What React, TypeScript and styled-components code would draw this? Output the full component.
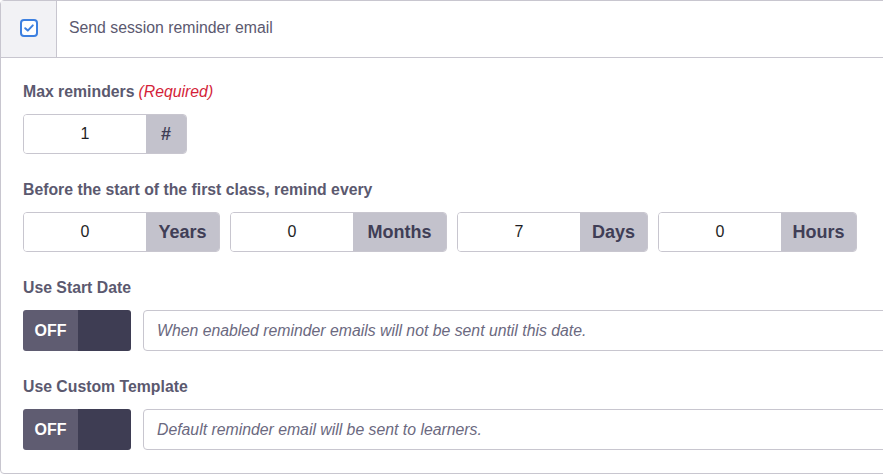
import React from 'react';
import styled, { createGlobalStyle } from 'styled-components';

const GlobalStyle = createGlobalStyle`
  html, body {
    margin: 0;
    padding: 0;
    background: #fff;
    overflow: hidden;
  }
  body {
    font-family: "Liberation Sans", Arial, sans-serif;
  }
`;

const Card = styled.div`
  width: 920px;
  height: 474px;
  box-sizing: border-box;
  border: 1px solid #c8c6cf;
  border-radius: 4px;
  background: #fff;
  display: flex;
  flex-direction: column;
`;

const Header = styled.div`
  display: flex;
  align-items: stretch;
  height: 57px;
  box-sizing: border-box;
  border-bottom: 1px solid #c8c6cf;
`;

const CheckCell = styled.div`
  width: 56px;
  flex: none;
  box-sizing: border-box;
  background: #f2f2f5;
  border-right: 1px solid #c8c6cf;
  display: flex;
  align-items: center;
  justify-content: center;
  padding-bottom: 2px;
`;

const HeaderTitle = styled.div`
  display: flex;
  align-items: center;
  padding-left: 12px;
  padding-bottom: 2px;
  font-size: 15.8px;
  color: #5b596f;
`;

const Body = styled.div`
  padding: 24px 22px 0 22px;
  display: flex;
  flex-direction: column;
  gap: 26px;
`;

const Field = styled.div`
  display: flex;
  flex-direction: column;
  gap: 12px;
`;

const Label = styled.div`
  font-size: 15.8px;
  line-height: 20px;
  font-weight: bold;
  color: #5b596f;
  em {
    font-weight: normal;
    color: #d41f3a;
    margin-left: 4px;
  }
`;

const Row = styled.div`
  display: flex;
  gap: 10px;
  align-items: center;
`;

const Group = styled.div`
  display: flex;
  height: 40px;
  box-sizing: border-box;
  border: 1px solid #c8c6cf;
  border-radius: 4px;
  overflow: hidden;
`;

const NumInput = styled.div`
  width: 122px;
  background: #fff;
  display: flex;
  align-items: center;
  justify-content: center;
  font-size: 16px;
  color: #1e1e24;
`;

const Addon = styled.div<{ $w: number }>`
  background: #c3c2cc;
  display: flex;
  align-items: center;
  justify-content: center;
  width: ${(p) => p.$w}px;
  font-size: 18px;
  font-weight: bold;
  color: #403e56;
`;

const Toggle = styled.div`
  display: flex;
  width: 108px;
  height: 41px;
  flex: none;
  border-radius: 3px;
  overflow: hidden;
`;

const ToggleLabel = styled.div`
  width: 55px;
  background: #5f5c71;
  color: #fff;
  font-weight: bold;
  font-size: 16px;
  display: flex;
  align-items: center;
  justify-content: center;
`;

const ToggleKnob = styled.div`
  flex: 1;
  background: #3e3d53;
`;

const TextBox = styled.div`
  flex: 1;
  height: 41px;
  box-sizing: border-box;
  border: 1px solid #c8c6cf;
  border-radius: 4px;
  display: flex;
  align-items: center;
  padding-left: 13px;
  font-size: 15.8px;
  font-style: italic;
  color: #6b6980;
  margin-left: 2px;
`;

const CheckIcon = () => (
  <svg width="18" height="18" viewBox="0 0 18 18">
    <rect x="1" y="1" width="16" height="16" rx="3" fill="#fff" stroke="#3d80e0" strokeWidth="2" />
    <path d="M5.2 9.2 L7.8 11.6 L12.8 6.4" fill="none" stroke="#3d80e0" strokeWidth="2" strokeLinecap="round" strokeLinejoin="round" />
  </svg>
);

const units = [
  { unit: 'Years', value: '0', w: 73 },
  { unit: 'Months', value: '0', w: 93 },
  { unit: 'Days', value: '7', w: 67 },
  { unit: 'Hours', value: '0', w: 75 },
];

const ToggleRow = ({ placeholder }: { placeholder: string }) => (
  <Row>
    <Toggle>
      <ToggleLabel>OFF</ToggleLabel>
      <ToggleKnob />
    </Toggle>
    <TextBox>{placeholder}</TextBox>
  </Row>
);

export default function App() {
  return (
    <>
      <GlobalStyle />
      <Card>
        <Header>
          <CheckCell>
            <CheckIcon />
          </CheckCell>
          <HeaderTitle>Send session reminder email</HeaderTitle>
        </Header>
        <Body>
          <Field>
            <Label>
              Max reminders<em>(Required)</em>
            </Label>
            <Row>
              <Group>
                <NumInput>1</NumInput>
                <Addon $w={40}>#</Addon>
              </Group>
            </Row>
          </Field>
          <Field>
            <Label>Before the start of the first class, remind every</Label>
            <Row>
              {units.map((u) => (
                <Group key={u.unit}>
                  <NumInput>{u.value}</NumInput>
                  <Addon $w={u.w}>{u.unit}</Addon>
                </Group>
              ))}
            </Row>
          </Field>
          <Field>
            <Label>Use Start Date</Label>
            <ToggleRow placeholder="When enabled reminder emails will not be sent until this date." />
          </Field>
          <Field>
            <Label>Use Custom Template</Label>
            <ToggleRow placeholder="Default reminder email will be sent to learners." />
          </Field>
        </Body>
      </Card>
    </>
  );
}
